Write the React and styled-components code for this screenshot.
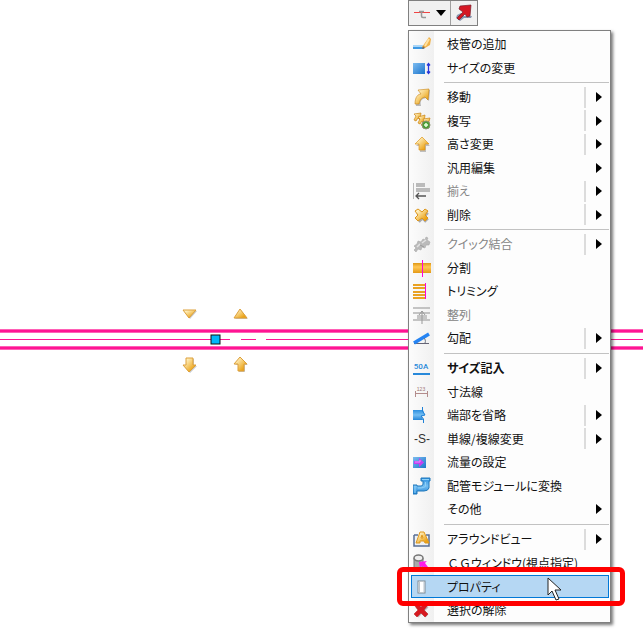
import React from "react";
import styled, { createGlobalStyle, css } from "styled-components";

const GlobalStyle = createGlobalStyle`
  body {
    margin: 0;
    background: #fff;
    overflow: hidden;
    font-family: "Noto Sans CJK JP", "Liberation Sans", sans-serif;
  }
`;

const Workspace = styled.main`
  position: relative;
  min-height: 100vh;
`;

const Drawing = styled.svg`
  display: block;
  width: 100%;
  height: 100vh;
`;

const ContextPanel = styled.div`
  position: absolute;
  top: 0;
  left: 408px;
  display: flex;
  flex-direction: column;
  align-items: flex-start;
  gap: 4px;
`;

const Toolbar = styled.div`
  display: flex;
  box-sizing: border-box;
  height: 26px;
  border: 1px solid #808080;
  background: #f1f1f1;
`;

const ToolButton = styled.button`
  display: flex;
  align-items: center;
  justify-content: center;
  gap: 5px;
  padding: 0 4px;
  border: 0;
  background: transparent;

  & + & {
    border-left: 1px solid #a0a0a0;
  }
`;

const Menu = styled.div`
  box-sizing: border-box;
  min-width: 203px;
  padding: 1px 0;
  border: 1px solid #808080;
  background: linear-gradient(to right, #fcfcfc, #f0f0f0 25px, #fdfdfd 25px);
  box-shadow: 2px 2px 3px #00000088;
`;

const Group = styled.div`
  & + & {
    margin-top: 6px;
  }

  & + &::before {
    content: "";
    display: block;
    height: 1px;
    margin: -3px 1px 2px 35px;
    background: #c2c2c2;
  }
`;

const Row = styled.div`
  position: relative;
  z-index: ${(p) => (p.$raised ? 1 : 0)};
  display: flex;
  height: 23px;

  &:nth-child(odd) {
    height: 24px;
  }
`;

const Item = styled.button`
  display: flex;
  flex: 1;
  align-items: center;
  gap: 16px;
  padding: 0 8px 0 4px;
  border: 0;
  background: transparent;
  color: #111;
  font-family: inherit;
  font-size: 12px;
  font-feature-settings: "palt";
  font-weight: ${(p) => (p.$bold ? 700 : 400)};
  line-height: 20px;
  text-align: left;
  white-space: nowrap;

  &:disabled {
    color: #858585;
  }

  ${(p) =>
    p.$active &&
    css`
      margin: 1px 1px 0 2px;
      padding: 0 6px 0 1px;
      border: 1px solid #0078d7;
      background: #b5d7f3;
    `}
`;

const Icon = styled.svg`
  flex: none;
  width: 18px;
  height: 18px;
`;

const Label = styled.span`
  flex: 1;
`;

const FullWidth = styled.span`
  font-feature-settings: normal;
`;

const Submenu = styled.span`
  display: flex;
  align-items: center;
  justify-content: flex-end;
  box-sizing: border-box;
  width: 18px;
  height: 21px;
  border-left: ${(p) => (p.$split ? "2px solid #dcdcdc" : "0")};
`;

const Callout = styled.div`
  position: absolute;
  inset: -7px -15px -8px -12px;
  border: 5px solid #ff0000;
  border-radius: 6px;
  pointer-events: none;
`;

const Cursor = styled.svg`
  position: absolute;
  top: 3px;
  left: 138px;
  width: 17px;
  height: 25px;
  pointer-events: none;
`;

const upArrow = "M9 2 L16 9 H12 V15 H6 V9 H2 Z";

const glyphs = {
  branch: (
    <>
      <path d="M0 10H13L11 14H0Z" fill="#3d98e3" />
      <path d="M0 10H12V12H0Z" fill="#a8d5f7" />
      <path d="M9 12L14 5L16 2L18 4L17 10L12 13Z" fill="#f0b24a" />
      <path d="M12 11L16 4" stroke="#ffe1a0" strokeWidth="2" />
      <path d="M9 14L10 11L12 13Z" fill="#8c6b48" />
    </>
  ),
  size: (
    <>
      <rect x="0" y="4" width="12" height="11" fill="url(#blueDeep)" />
      <path d="M15.5 5V14M14 6.500L15.500 4.500L17 6.500M14 12.500L15.500 14.500L17 12.500" stroke="#2836db" strokeWidth="1.3" fill="none" />
    </>
  ),
  move: (
    <>
      <path d="M3 18C2 10 5 7 10 7L7 3L17 2L16 13L13 10C8 11 7 13 8 18Z" fill="#777" opacity=".5" />
      <path d="M2 16C2 9 5 6 8 6L5 2L16 1L15 12L12 9C8 10 7 12 6 16Z" fill="url(#gold)" stroke="#ca8412" strokeWidth=".6" />
    </>
  ),
  copy: (
    <>
      <g fill="url(#gold)" stroke="#ca8412" strokeWidth=".7">
        <path d="M1 8L3 4L1 2L8 1L7 8L5 6L3 9Z" />
        <path d="M5 11L7 7L5 5L12 3L11 11L9 9L7 12Z" />
        <path d="M8 13L11 9L10 7L17 6L15 13L13 11L11 14Z" />
      </g>
      <circle cx="13" cy="13" r="4" fill="#4c9e36" stroke="#8b8f70" />
      <path d="M13 11V15M11 13H15" stroke="#e7ffdc" strokeWidth="1.5" />
    </>
  ),
  height: (
    <>
      <path d={upArrow} fill="#999" transform="translate(1 2)" opacity=".6" />
      <path d={upArrow} fill="url(#gold)" stroke="#dc971c" strokeWidth=".7" />
    </>
  ),
  align: (
    <>
      <path d="M0.500 1V17" stroke="#bbb" />
      <path d="M3 3H12M3 8H17" stroke="#bbb" strokeWidth="4" />
      <path d="M13 14H3M6 11L3 14L6 17" stroke="#555" strokeWidth="1.3" fill="none" />
    </>
  ),
  remove: (
    <>
      <path d="M5 6L14 15M14 6L5 15" stroke="#aaa" strokeWidth="5" />
      <path d="M2 5L5 3L9 6L12 3L15 5L12 9L15 12L12 15L9 12L5 15L2 12L5 9Z" fill="url(#gold)" stroke="#dd961c" />
    </>
  ),
  quick: (
    <>
      <path d="M1 11L4 9L5 6L8 7L10 4L12 5L13 2L15 3L14 5L17 7L16 10L13 10L12 13L9 12L8 15L5 14L3 17L1 15L3 13Z" fill="#bababa" stroke="#aaa" strokeWidth=".6" />
      <path d="M4 12L7 9M9 8L13 5" stroke="#e2e2e2" strokeWidth="1.5" />
      <path d="M7 10L11 12" stroke="#999" />
    </>
  ),
  divide: (
    <>
      <path d="M0 4H18V14H0Z" fill="url(#band)" />
      <path d="M9.500 1V18" stroke="#ff00dc" />
    </>
  ),
  trim: (
    <>
      <path d="M0 3H12M0 6H12M0 10H12M0 13H12M0 16H12" stroke="#e9a223" strokeWidth="2" />
      <path d="M12.500 1V17" stroke="#ff00dc" />
    </>
  ),
  arrange: (
    <>
      <path d="M0 2H17M0 7H17M0 14H17" stroke="#b2b2b2" strokeWidth="1.5" />
      <path d="M4 11H14" stroke="#c5c5c5" strokeWidth="4" />
      <path d="M9 5V18M6 9L9 5L12 9" stroke="#999" fill="none" />
    </>
  ),
  slope: (
    <>
      <path d="M1 14.500H16" stroke="#667" />
      <path d="M1 14L16 5" stroke="#2584f3" strokeWidth="3.500" />
      <path d="M11 9C12 10 13 12 12 14" stroke="#66707e" fill="none" />
    </>
  ),
  annotate: (
    <>
      <text x="8" y="10" fill="#2889da" fontFamily="Roboto" fontSize="8" fontWeight="500" textAnchor="middle">50A</text>
      <path d="M0 15H17" stroke="#2889da" strokeWidth="2" />
    </>
  ),
  dimension: (
    <>
      <path d="M2.500 8V14M14.500 8V14M2 10.500H15" stroke="#b38c8c" fill="none" />
      <text x="8" y="8" fill="#9d7272" fontFamily="Liberation Sans" fontSize="5" textAnchor="middle">123</text>
    </>
  ),
  end: (
    <>
      <path d="M0 4H10L12 9L9 10L10 14H0Z" fill="url(#blue)" />
      <path d="M9.500 1V5L12 9L8 10L10.500 13V17" stroke="#1f81d6" fill="none" />
    </>
  ),
  line: (
    <text x="9" y="13" fill="#333" fontFamily="Liberation Sans" fontSize="12" textAnchor="middle">-S-</text>
  ),
  flow: (
    <>
      <rect x="0" y="4" width="13" height="11" fill="url(#blueDeep)" />
      <path d="M1 8H6V5L11 9.500L6 14V11H1Z" fill="#c63ff0" />
      <path d="M2 9H7V7" stroke="#e394ff" fill="none" />
    </>
  ),
  pipe: (
    <>
      <path d="M8 1H17V4H16V11Q15 14 11 14H4V17H0V8H4V9H8Q10 9 10 7V4H8Z" fill="url(#blue)" stroke="#2079bb" />
      <path d="M9 2.500H16M2 9V16M12.500 5V9Q12 11 5 11" stroke="#8ed0f7" fill="none" />
    </>
  ),
  around: (
    <>
      <path d="M1 5H5M13 5H16V16H1V5" stroke="#5a6f94" strokeWidth="1.500" fill="#edf1f6" />
      <path d="M3 13L7 2H11L16 13H12L11 11H7V13ZM8 8H10L9 5Z" fill="url(#gold)" stroke="#df981d" fillRule="evenodd" />
    </>
  ),
  window: (
    <>
      <path d="M1 4V15Q6 18 10 15V4" fill="#aaa" stroke="#777" />
      <ellipse cx="5.500" cy="4" rx="4.500" ry="3" fill="#eee" stroke="#777" strokeWidth="1.500" />
      <path d="M6 8L14 7L12 9L15 13L13 15L9 12L7 14Z" fill="#ff19e8" />
    </>
  ),
  property: (
    <>
      <rect x="5" y="3" width="7" height="12" fill="#fff" stroke="#7f8b95" />
      <path d="M6.500 4V14M11 4V14" stroke="#b7c2cc" />
    </>
  ),
  clear: (
    <>
      <path d="M4 5L14 15M14 5L4 15" stroke="#999" strokeWidth="4" opacity=".6" />
      <path d="M2 5L4 3L8 6L12 2L15 4L11 9L15 13L12 16L8 12L4 16L1 13L5 9Z" fill="#d71920" stroke="#b5181b" strokeWidth=".5" />
    </>
  ),
};

const groups = [
  [
    ["branch", "枝管の追加"],
    ["size", "サイズの変更"],
  ],
  [
    ["move", "移動", { sub: true, split: true }],
    ["copy", "複写", { sub: true, split: true }],
    ["height", "高さ変更", { sub: true, split: true }],
    [null, "汎用編集", { sub: true }],
    ["align", "揃え", { sub: true, split: true, disabled: true }],
    ["remove", "削除", { sub: true, split: true }],
  ],
  [
    ["quick", "クイック結合", { sub: true, split: true, disabled: true }],
    ["divide", "分割"],
    ["trim", "トリミング"],
    ["arrange", "整列", { disabled: true }],
    ["slope", "勾配", { sub: true, split: true }],
  ],
  [
    ["annotate", "サイズ記入", { sub: true, split: true, bold: true }],
    ["dimension", "寸法線"],
    ["end", "端部を省略", { sub: true, split: true }],
    ["line", "単線/複線変更", { sub: true, split: true }],
    ["flow", "流量の設定"],
    ["pipe", "配管モジュールに変換"],
    [null, "その他", { sub: true }],
  ],
  [
    ["around", "アラウンドビュー", { sub: true, split: true }],
    ["window", "ウィンドウ(視点指定)", { prefix: "ＣＧ" }],
    ["property", "プロパティ", { active: true }],
    ["clear", "選択の解除"],
  ],
];

function MenuRow({ icon, label, options = {} }) {
  const { sub, split, disabled, bold, active, prefix } = options;
  return (
    <Row role="none" $raised={active}>
      <Item type="button" role="menuitem" aria-haspopup={sub ? "menu" : undefined} disabled={disabled} $bold={bold} $active={active}>
        <Icon viewBox="0 0 18 18" aria-hidden="true">{icon && glyphs[icon]}</Icon>
        <Label>
          {prefix && <FullWidth>{prefix}</FullWidth>}
          {label}
        </Label>
        {sub && (
          <Submenu $split={split}>
            <svg width="6" height="10" aria-hidden="true"><path d="M0 0L6 5L0 10Z" fill="#000" /></svg>
          </Submenu>
        )}
      </Item>
      {active && (
        <>
          <Callout />
          <Cursor viewBox="0 0 17 25" aria-hidden="true">
            <path d="M1 1V18L5 14L9 23L12 22L8 13H14Z" fill="#fff" stroke="#222" />
          </Cursor>
        </>
      )}
    </Row>
  );
}

function PipeDrawing() {
  return (
    <Drawing role="img" aria-label="配管">
      <defs>
        <linearGradient id="gold" x1="0" y1="0" x2="1" y2="1">
          <stop offset="0.2" stopColor="#ffefbd" />
          <stop offset="0.8" stopColor="#eba316" />
        </linearGradient>
        <linearGradient id="blue" x1="0" y1="0" x2="0" y2="1">
          <stop stopColor="#2b8fe0" />
          <stop offset="0.5" stopColor="#75bef2" />
          <stop offset="1" stopColor="#2385d8" />
        </linearGradient>
        <linearGradient id="blueDeep" x1="0" y1="0" x2="1" y2="1">
          <stop stopColor="#7dbcf0" />
          <stop offset="1" stopColor="#1b74cc" />
        </linearGradient>
        <linearGradient id="band" x1="0" y1="0" x2="0" y2="1">
          <stop stopColor="#df9816" />
          <stop offset="0.4" stopColor="#ffc755" />
          <stop offset="1" stopColor="#e49a16" />
        </linearGradient>
      </defs>
      <g stroke="#ff1493">
        <path d="M0 331H4000M0 348H4000" strokeWidth="4" opacity=".35" />
        <path d="M0 331H4000M0 348H4000" strokeWidth="3" />
        <path d="M0 339.500H230M241 339.500H256M266 339.500H4000" />
      </g>
      <rect x="211" y="335" width="9" height="9" fill="#00b7fb" stroke="#111" />
      <g fill="#777" opacity=".4" transform="translate(1 1)">
        <path d="M183 310H196L189 318ZM234 318L240 309L247 318ZM186 358H193V365H196L189 372L183 365H186ZM240 357L247 364H244V371H238V364H234Z" />
      </g>
      <g fill="url(#gold)" stroke="#dda03a">
        <path d="M183 310H196L189 318Z" />
        <path d="M234 318L240 309L247 318Z" />
        <path d="M186 358H193V365H196L189 372L183 365H186Z" />
        <path d="M240 357L247 364H244V371H238V364H234Z" />
      </g>
    </Drawing>
  );
}

export default function App() {
  return (
    <>
      <GlobalStyle />
      <Workspace>
        <PipeDrawing />
        <ContextPanel>
          <Toolbar role="toolbar" aria-label="配管ツール">
            <ToolButton type="button" aria-label="枝管">
              <svg width="18" height="18" aria-hidden="true">
                <path d="M1 8.500H17" stroke="#f04444" />
                <path d="M6 7.500H11M8.500 8V12Q8.500 13.500 10 13.500H13" stroke="#999" strokeWidth="1.500" fill="none" />
              </svg>
              <svg width="10" height="6" aria-hidden="true"><path d="M0 0H10L5 6Z" fill="#000" /></svg>
            </ToolButton>
            <ToolButton type="button" aria-label="選択">
              <svg width="18" height="18" aria-hidden="true">
                <path d="M2 11L6 9L8 12L17 12L16 14L9 14L5 17L1 14Z" fill="#8695ae" />
                <path d="M2 14L8 8L4 5L5 2L16 1L15 12L12 13L10 10L4 16Z" fill="#d51824" stroke="#771c2a" strokeWidth=".7" />
              </svg>
            </ToolButton>
          </Toolbar>
          <Menu role="menu" aria-label="編集">
            {groups.map((items, index) => (
              <Group key={index} role="group">
                {items.map(([icon, label, options]) => (
                  <MenuRow key={label} icon={icon} label={label} options={options} />
                ))}
              </Group>
            ))}
          </Menu>
        </ContextPanel>
      </Workspace>
    </>
  );
}
